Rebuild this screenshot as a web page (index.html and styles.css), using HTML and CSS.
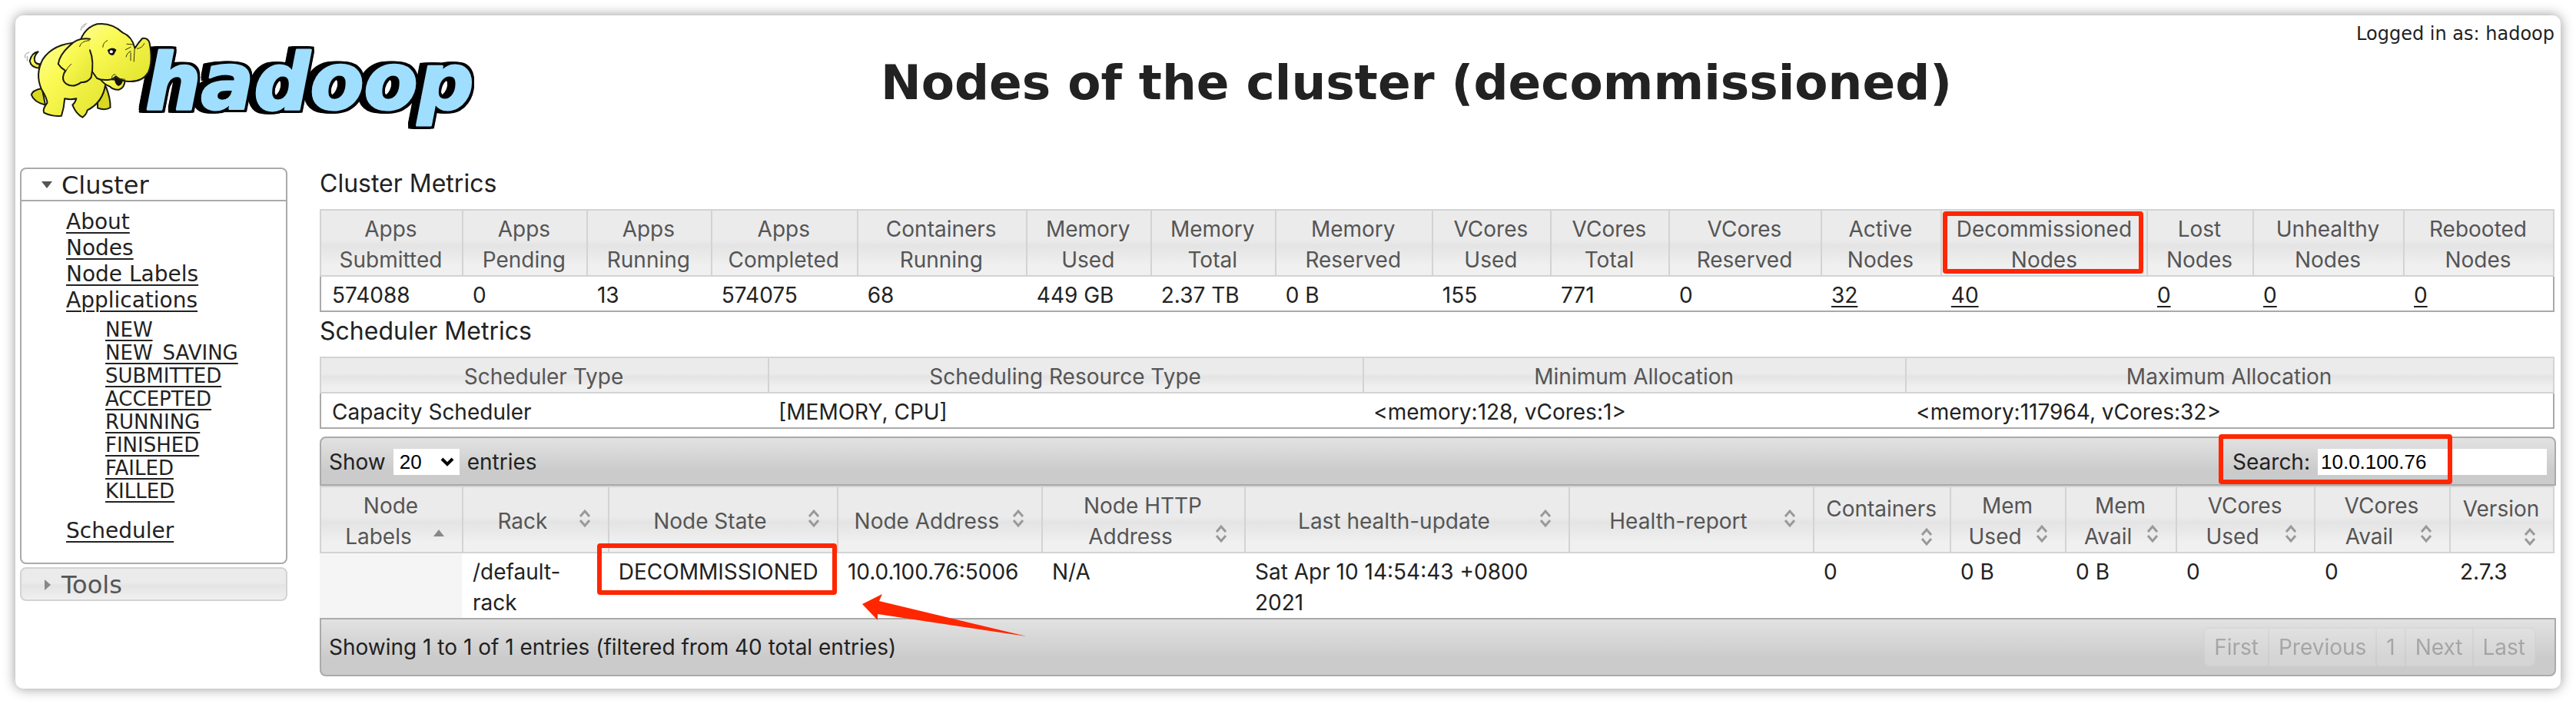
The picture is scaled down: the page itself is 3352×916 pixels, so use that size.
FILE: index.html
```html
<!DOCTYPE html>
<html lang="en">
<head>
<meta charset="utf-8">
<title>Nodes of the cluster (decommissioned)</title>
<link rel="stylesheet" href="styles.css">
</head>
<body>
<div class="window">
  <header class="header">
    <svg class="logo" viewBox="20 20 606 156" role="img" aria-label="Hadoop">
      <defs>
        <linearGradient id="hide" x1="0" y1="0" x2="1" y2="1">
          <stop offset="0" stop-color="#fdfd9a"/><stop offset="0.35" stop-color="#fafa55"/><stop offset="1" stop-color="#e2e22c"/>
        </linearGradient>
      </defs>
      <text class="logo-word" x="189" y="142">hadoop</text>
      <g class="elephant" transform="scale(0.4209 0.3333)">
        <path class="far" d="M300 350 L328 340 Q342 385 341 420 Q325 432 302 422 Z"/>
        <path class="far" d="M130 345 Q100 352 97 370 Q104 398 140 410 Z"/>
        <path class="skin" d="M122 266 Q96 264 92 238 Q98 206 118 202 Q102 222 108 240 Q112 250 122 250 Z"/>
        <path class="skin" d="M240 166 Q165 170 132 232 Q108 290 128 348 Q146 384 146 402 Q130 428 136 440 Q160 456 190 452 Q198 420 200 385 Q218 390 236 385 Q232 402 224 410 Q236 446 255 458 Q268 446 270 430 Q318 400 326 330 L300 220 Z"/>
        <path class="skin" d="M308 306 Q322 330 340 338 Q352 352 368 350 Q386 340 386 314 Z"/>
        <path class="mouth" d="M354 296 Q352 328 366 336 Q380 330 380 310 Z"/>
        <path class="skin" d="M240 200 Q250 112 300 94 Q344 86 380 128 Q408 142 417 188 Q428 166 440 150 Q456 146 462 166 Q474 240 458 284 Q438 324 390 317 Q372 314 358 298 Q352 310 334 312 Q312 314 300 306 Z"/>
        <path class="ear" d="M278 152 Q238 146 214 180 Q184 214 180 250 Q188 266 202 276 Q186 312 206 328 Q226 344 250 322 Q272 322 282 302 Q292 240 278 196"/>
        <path class="crease" d="M202 282 Q206 266 220 250 M246 182 Q250 160 276 158 M318 184 Q318 166 332 158 M392 172 L412 174 M388 194 L404 184 M390 222 Q392 206 404 200 M404 236 L404 206 M416 192 L414 240 M424 190 Q440 188 446 170 M346 306 Q344 292 356 290 M356 300 Q370 310 386 310"/>
        <path class="mouth" d="M332 196 Q346 180 360 194 L352 214 Q342 220 336 208 Z"/>
        <ellipse class="glint" cx="344" cy="202" rx="5" ry="6"/>
        <path class="motion" d="M250 118 Q250 98 268 92 M256 108 L264 98 M78 226 Q72 212 90 204 M84 238 L84 220"/>
      </g>
    </svg>
    <h1 class="title">Nodes of the cluster (decommissioned)</h1>
    <p class="user">Logged in as: hadoop</p>
  </header>

  <div class="layout">
    <nav class="sidebar" aria-label="Main">
      <section class="group">
        <button class="group-head open" type="button"><svg class="tri" viewBox="0 0 14 14" aria-hidden="true"><path d="M0 2H14L7 11Z"/></svg>Cluster</button>
        <div class="group-body">
          <ul class="links">
            <li><a href="#">About</a></li>
            <li><a href="#">Nodes</a></li>
            <li><a href="#">Node Labels</a></li>
            <li><a href="#">Applications</a>
              <ul class="sublinks">
                <li><a href="#">NEW</a></li>
                <li><a href="#">NEW_SAVING</a></li>
                <li><a href="#">SUBMITTED</a></li>
                <li><a href="#">ACCEPTED</a></li>
                <li><a href="#">RUNNING</a></li>
                <li><a href="#">FINISHED</a></li>
                <li><a href="#">FAILED</a></li>
                <li><a href="#">KILLED</a></li>
              </ul>
            </li>
            <li><a href="#">Scheduler</a></li>
          </ul>
        </div>
      </section>
      <section class="group">
        <button class="group-head closed" type="button"><svg class="tri" viewBox="0 0 14 14" aria-hidden="true"><path d="M4 0V14L12 7Z"/></svg>Tools</button>
      </section>
    </nav>

    <main class="content">
      <h2 class="section-title">Cluster Metrics</h2>
      <table class="grid metrics">
        <colgroup><col><col><col><col><col><col><col><col><col><col><col><col><col><col><col><col></colgroup>
        <thead>
          <tr>
            <th>Apps<br>Submitted</th><th>Apps<br>Pending</th><th>Apps<br>Running</th><th>Apps<br>Completed</th>
            <th>Containers<br>Running</th><th>Memory<br>Used</th><th>Memory<br>Total</th><th>Memory<br>Reserved</th>
            <th>VCores<br>Used</th><th>VCores<br>Total</th><th>VCores<br>Reserved</th><th>Active<br>Nodes</th>
            <th class="anchor wide">Decommissioned<br>Nodes<span class="mark mark-head"></span></th>
            <th>Lost<br>Nodes</th><th>Unhealthy<br>Nodes</th><th>Rebooted<br>Nodes</th>
          </tr>
        </thead>
        <tbody>
          <tr>
            <td>574088</td><td>0</td><td>13</td><td>574075</td><td>68</td><td>449 GB</td><td>2.37 TB</td><td>0 B</td>
            <td>155</td><td>771</td><td>0</td><td><a href="#">32</a></td><td><a href="#">40</a></td>
            <td><a href="#">0</a></td><td><a href="#">0</a></td><td><a href="#">0</a></td>
          </tr>
        </tbody>
      </table>

      <h2 class="section-title">Scheduler Metrics</h2>
      <table class="grid scheduler">
        <colgroup><col><col><col><col></colgroup>
        <thead>
          <tr><th>Scheduler Type</th><th>Scheduling Resource Type</th><th>Minimum Allocation</th><th>Maximum Allocation</th></tr>
        </thead>
        <tbody>
          <tr><td>Capacity Scheduler</td><td>[MEMORY, CPU]</td><td>&lt;memory:128, vCores:1&gt;</td><td>&lt;memory:117964, vCores:32&gt;</td></tr>
        </tbody>
      </table>

      <div class="bar bar-top">
        <label class="field" for="length">Show
          <span class="select-wrap">
            <select class="select" id="length"><option>20</option><option>40</option><option>60</option></select>
            <svg class="caret" viewBox="0 0 18 12" aria-hidden="true"><path d="M2 2L9 9L16 2"/></svg>
          </span>
          entries</label>
        <div class="field anchor">
          <label for="search">Search:</label>
          <input class="search" id="search" type="text" value="10.0.100.76">
          <span class="mark mark-search"></span>
        </div>
      </div>
      <table class="grid nodes">
        <colgroup><col><col><col><col><col><col><col><col><col><col><col><col><col></colgroup>
        <thead>
          <tr>
            <th><div class="head">Node<br>Labels<svg class="sort" viewBox="0 0 32 32"><path class="up" d="M9 20H23L16 11Z"/></svg></div></th>
            <th><div class="head">Rack<svg class="sort" viewBox="0 0 32 32"><path d="M10 14L16 7L22 14M10 19L16 26L22 19"/></svg></div></th>
            <th><div class="head">Node State<svg class="sort" viewBox="0 0 32 32"><path d="M10 14L16 7L22 14M10 19L16 26L22 19"/></svg></div></th>
            <th><div class="head">Node Address<svg class="sort" viewBox="0 0 32 32"><path d="M10 14L16 7L22 14M10 19L16 26L22 19"/></svg></div></th>
            <th><div class="head">Node HTTP<br>Address<svg class="sort" viewBox="0 0 32 32"><path d="M10 14L16 7L22 14M10 19L16 26L22 19"/></svg></div></th>
            <th><div class="head">Last health-update<svg class="sort" viewBox="0 0 32 32"><path d="M10 14L16 7L22 14M10 19L16 26L22 19"/></svg></div></th>
            <th><div class="head">Health-report<svg class="sort" viewBox="0 0 32 32"><path d="M10 14L16 7L22 14M10 19L16 26L22 19"/></svg></div></th>
            <th><div class="head">Containers<svg class="sort" viewBox="0 0 32 32"><path d="M10 14L16 7L22 14M10 19L16 26L22 19"/></svg></div></th>
            <th><div class="head">Mem<br>Used<svg class="sort" viewBox="0 0 32 32"><path d="M10 14L16 7L22 14M10 19L16 26L22 19"/></svg></div></th>
            <th><div class="head">Mem<br>Avail<svg class="sort" viewBox="0 0 32 32"><path d="M10 14L16 7L22 14M10 19L16 26L22 19"/></svg></div></th>
            <th><div class="head">VCores<br>Used<svg class="sort" viewBox="0 0 32 32"><path d="M10 14L16 7L22 14M10 19L16 26L22 19"/></svg></div></th>
            <th><div class="head">VCores<br>Avail<svg class="sort" viewBox="0 0 32 32"><path d="M10 14L16 7L22 14M10 19L16 26L22 19"/></svg></div></th>
            <th><div class="head">Version<svg class="sort" viewBox="0 0 32 32"><path d="M10 14L16 7L22 14M10 19L16 26L22 19"/></svg></div></th>
          </tr>
        </thead>
        <tbody>
          <tr>
            <td class="sorted"></td><td>/default-<br>rack</td>
            <td class="anchor">DECOMMISSIONED<span class="mark mark-state"></span></td>
            <td class="anchor">10.0.100.76:5006<svg class="arrow" viewBox="0 0 214 36" aria-hidden="true"><path d="M0 13L26 0L22 9L214 55L20 26L20 34Z"/></svg></td>
            <td>N/A</td><td>Sat Apr 10 14:54:43 +0800 2021</td><td></td><td>0</td><td>0 B</td><td>0 B</td><td>0</td><td>0</td><td>2.7.3</td>
          </tr>
        </tbody>
      </table>
      <div class="bar bar-bottom">
        <p class="info">Showing 1 to 1 of 1 entries (filtered from 40 total entries)</p>
        <div class="pager">
          <button type="button" disabled>First</button><button type="button" disabled>Previous</button><button type="button" disabled>1</button><button type="button" disabled>Next</button><button type="button" disabled>Last</button>
        </div>
      </div>
    </main>
  </div>
</div>
</body>
</html>
```
FILE: styles.css
```css
* { box-sizing: border-box; }

body {
  margin: 0;
  padding: 20px;
  background: #fff;
  color: #222;
  font: 28px/40px Inter, "Liberation Sans", sans-serif;
}

h1, h2, p, ul { margin: 0; padding: 0; }
ul { list-style: none; }
a { color: inherit; text-underline-offset: 4px; text-decoration-thickness: 2px; }
button { font: inherit; color: inherit; }

.window {
  min-height: calc(100vh - 40px);
  padding: 0 6px 16px;
  background: #fff;
  border-radius: 10px;
  box-shadow: 0 0 16px rgba(0, 0, 0, 0.42);
}

/* Header */
.header {
  display: grid;
  grid-template-columns: 600px 1fr auto;
  margin: 0 2px 0 -6px;
  height: 194px;
}
.logo { width: 606px; height: 156px; overflow: visible; }
.logo-word {
  font: italic bold 102px "DejaVu Sans", sans-serif;
  fill: #9fdeff;
  stroke: #9fdeff;
  stroke-width: 3px;
  stroke-linejoin: round;
  filter: drop-shadow(3px 0 0 #000) drop-shadow(-4px 0 0 #000) drop-shadow(0 3px 0 #000) drop-shadow(0 -3px 0 #000) drop-shadow(-6px 0 0 #000);
}
.elephant path { vector-effect: non-scaling-stroke; stroke-linecap: round; stroke-linejoin: round; }
.skin, .ear { fill: url(#hide); stroke: #1a1a10; stroke-width: 2px; }
.far { fill: #d8d820; stroke: #1a1a10; stroke-width: 2px; }
.mouth { fill: #111; }
.glint { fill: #fff; }
.crease { fill: none; stroke: #33330f; stroke-width: 1px; }
.motion { fill: none; stroke: #999; stroke-width: 1px; }
.title {
  padding-top: 48px;
  font: bold 63px/80px "DejaVu Sans", sans-serif;
  text-align: center;
}
.user {
  padding-top: 8px;
  font: 24px/32px "DejaVu Sans", sans-serif;
}

.layout { display: flex; gap: 42px; }

/* Sidebar */
.sidebar {
  flex: none;
  width: 348px;
  padding-top: 4px;
  font-family: "DejaVu Sans", sans-serif;
}
.group { margin-bottom: 4px; }
.group-head {
  display: flex;
  align-items: center;
  gap: 12px;
  width: 100%;
  height: 44px;
  padding: 2px 26px 0;
  border: 2px solid #d3d3d3;
  border-radius: 8px;
  background: linear-gradient(#ebebeb 45%, #e4e4e4 54%, #f0f0f0);
  color: #555;
  font-size: 32px;
}
.group-head.open {
  border-color: #aaa;
  border-radius: 8px 8px 0 0;
  background: #fff;
  color: #222;
}
.tri { width: 14px; height: 14px; fill: #888; }
.open .tri { fill: #555; }
.group-body {
  padding: 10px 0 24px 58px;
  border: 2px solid #aaa;
  border-top: 0;
  border-radius: 0 0 8px 8px;
}
.links { font-size: 28px; line-height: 34px; }
.sublinks {
  padding: 6px 0 20px 51px;
  font-size: 26px;
  line-height: 30px;
}

/* Tables */
.section-title {
  padding: 2px 0 10px;
  font-size: 32px;
  font-weight: 400;
  line-height: 46px;
}
.content { flex: 1; min-width: 0; }
.grid {
  width: calc(100% - 2px);
  table-layout: fixed;
  border-collapse: separate;
  border-spacing: 0;
}
.grid th {
  padding: 4px 14px 0 12px;
  border: 2px solid #d3d3d3;
  border-width: 2px 0 2px 2px;
  background: linear-gradient(#ebebeb 45%, #e4e4e4 54%, #e8e8e8 65%, #f0f0f0 85%);
  color: #555;
  font-weight: 400;
}
.grid th:last-child { border-right-width: 2px; }
.grid th.wide { padding: 4px 0 0; }
.grid td { padding: 4px 14px 0; vertical-align: top; }
.metrics td, .scheduler td { border-bottom: 2px solid #aaa; }
.metrics td:first-child, .scheduler td:first-child { border-left: 2px solid #aaa; }
.metrics td:last-child, .scheduler td:last-child { border-right: 2px solid #aaa; }
.grid td.sorted { background: #f5f5f5; }
.anchor { position: relative; }

.metrics col { width: 5.57%; }
.metrics col:nth-child(1) { width: 6.36%; }
.metrics col:nth-child(4) { width: 6.53%; }
.metrics col:nth-child(5) { width: 7.57%; }
.metrics col:nth-child(8) { width: 7.02%; }
.metrics col:nth-child(9), .metrics col:nth-child(10) { width: 5.3%; }
.metrics col:nth-child(11) { width: 6.81%; }
.metrics col:nth-child(12) { width: 5.36%; }
.metrics col:nth-child(13) { width: 9.22%; }
.metrics col:nth-child(14) { width: 4.75%; }
.metrics col:nth-child(15) { width: 6.74%; }
.metrics col:nth-child(16) { width: 6.77%; }

.scheduler col:nth-child(1) { width: 20.05%; }
.scheduler col:nth-child(2) { width: 26.62%; }
.scheduler col:nth-child(3) { width: 24.28%; }
.scheduler col:nth-child(4) { width: 29.05%; }

.nodes col:nth-child(1) { width: 6.36%; }
.nodes col:nth-child(2) { width: 6.53%; }
.nodes col:nth-child(3) { width: 10.25%; }
.nodes col:nth-child(4) { width: 9.15%; }
.nodes col:nth-child(5) { width: 9.08%; }
.nodes col:nth-child(6) { width: 14.51%; }
.nodes col:nth-child(7) { width: 10.94%; }
.nodes col:nth-child(8) { width: 6.12%; }
.nodes col:nth-child(9) { width: 5.16%; }
.nodes col:nth-child(10) { width: 4.95%; }
.nodes col:nth-child(11) { width: 6.19%; }
.nodes col:nth-child(12) { width: 6.05%; }
.nodes col:nth-child(13) { width: 4.71%; }

.head { display: flow-root; }
.sort {
  float: right;
  width: 32px;
  height: 32px;
  fill: none;
  stroke: #999;
  stroke-width: 3px;
}
.sort .up { fill: #888; stroke: none; }

/* Toolbars around the nodes table */
.bar {
  display: flex;
  justify-content: space-between;
  border: 2px solid #aaa;
  background: linear-gradient(#e2e2e2, #cbcbcb 70%);
}
.bar-top {
  margin-top: 10px;
  padding: 14px 10px 12px;
  border-radius: 8px 8px 0 0;
}
.bar-bottom {
  padding: 10px 24px 10px 10px;
  border-radius: 0 0 8px 8px;
}
.field {
  display: flex;
  align-items: center;
  gap: 10px;
  line-height: 34px;
}
.select-wrap { position: relative; display: flex; }
.select, .search {
  height: 34px;
  border: 0;
  border-radius: 0;
  background: #fff;
  color: #000;
  font: 26px/34px "Liberation Sans", sans-serif;
}
.select { width: 86px; padding: 0 8px; appearance: none; }
.caret {
  position: absolute;
  top: 11px;
  right: 7px;
  width: 18px;
  height: 12px;
  fill: none;
  stroke: #000;
  stroke-width: 4px;
  pointer-events: none;
}
.search { width: 298px; padding: 0 4px; }
.info { line-height: 52px; }
.pager { display: flex; opacity: 0.35; }
.pager button {
  padding: 0 12px;
  border: 2px solid #d3d3d3;
  border-left-width: 0;
  background: #e8e8e8;
  color: #555;
}
.pager button:first-child { border-left-width: 2px; border-radius: 8px 0 0 8px; }
.pager button:last-child { border-radius: 0 8px 8px 0; }

/* Red annotations */
.mark {
  position: absolute;
  border: 6px solid #ff2600;
  border-radius: 4px;
  pointer-events: none;
}
.mark-head { inset: 1px 4px 2px 1px; }
.mark-state { inset: -13px 0 30px -14px; z-index: 1; }
.mark-search { inset: -19px 123px -12px -18px; z-index: 1; }
.arrow {
  position: absolute;
  top: 53px;
  left: 33px;
  z-index: 1;
  width: 214px;
  height: 36px;
  overflow: visible;
  fill: #ff2600;
}
```
